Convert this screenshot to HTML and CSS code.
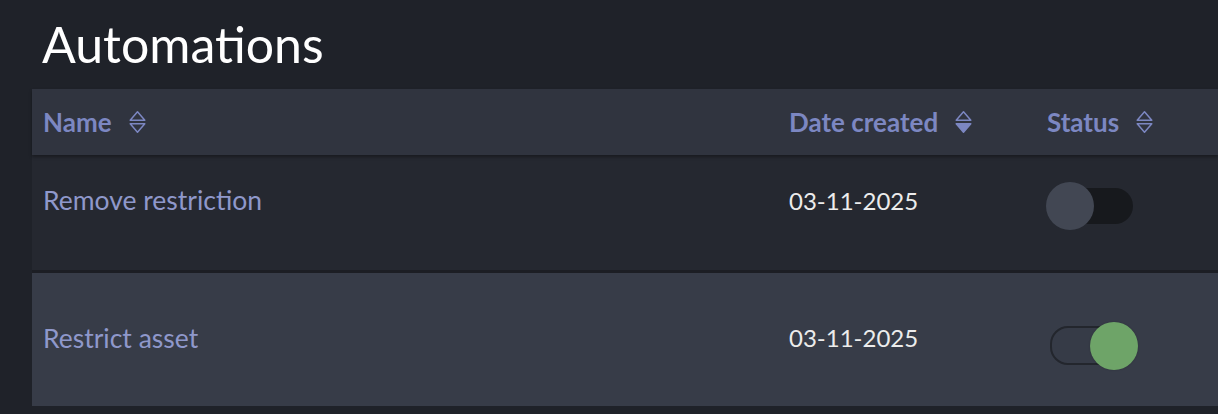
FILE: index.html
```html
<!DOCTYPE html>
<html lang="en">
<head>
<meta charset="utf-8">
<title>Automations</title>
<link rel="stylesheet" href="styles.css">
</head>
<body>
  <h1 class="title">Automations</h1>
  <div class="table">
    <div class="row head">
      <div class="cell">Name<svg class="sort" viewBox="0 0 17 24"><path d="M1.2 10.3 L8.5 1.8 L15.8 10.3 Z" fill="none" stroke="currentColor" stroke-width="1.5" stroke-linejoin="round"/><path d="M1.2 13.7 L8.5 22.2 L15.8 13.7 Z" fill="none" stroke="currentColor" stroke-width="1.5" stroke-linejoin="round"/></svg></div>
      <div class="cell">Date created<svg class="sort" viewBox="0 0 17 24"><path d="M1.2 10.3 L8.5 1.8 L15.8 10.3 Z" fill="none" stroke="currentColor" stroke-width="1.5" stroke-linejoin="round"/><path d="M1.2 13.7 L8.5 22.2 L15.8 13.7 Z" fill="currentColor" stroke="currentColor" stroke-width="1.5" stroke-linejoin="round"/></svg></div>
      <div class="cell">Status<svg class="sort" viewBox="0 0 17 24"><path d="M1.2 10.3 L8.5 1.8 L15.8 10.3 Z" fill="none" stroke="currentColor" stroke-width="1.5" stroke-linejoin="round"/><path d="M1.2 13.7 L8.5 22.2 L15.8 13.7 Z" fill="none" stroke="currentColor" stroke-width="1.5" stroke-linejoin="round"/></svg></div>
    </div>
    <div class="row body first">
      <div class="cell name">Remove restriction</div>
      <div class="cell date">03-11-2025</div>
      <div class="cell"><span class="toggle off"><span class="knob"></span></span></div>
    </div>
    <div class="row body second">
      <div class="cell name">Restrict asset</div>
      <div class="cell date">03-11-2025</div>
      <div class="cell"><span class="toggle on"><span class="knob"></span></span></div>
    </div>
  </div>
</body>
</html>
```

FILE: styles.css
```css
* { box-sizing: border-box; }
html, body { margin: 0; padding: 0; }
body {
  background: #1f2229;
  font-family: "Lato", "Open Sans", sans-serif;
  width: 1218px;
  height: 414px;
  overflow: hidden;
}
.title {
  margin: 0;
  height: 89px;
  padding: 12px 0 0 42px;
  font-size: 50px;
  font-weight: 400;
  color: #ffffff;
  line-height: 64px;
}
.table {
  margin-left: 32px;
  display: flex;
  flex-direction: column;
}
.row {
  display: grid;
  grid-template-columns: 746px 258px 1fr;
  align-items: center;
}
.cell { padding-left: 11px; display: flex; align-items: center; }
.head {
  height: 66px;
  background: #30343f;
  color: #7c87c2;
  font-weight: 700;
  font-size: 26px;
  box-shadow: 0 2px 3px rgba(0,0,0,0.35);
  position: relative;
  z-index: 1;
}
.sort {
  width: 17px;
  height: 24px;
  margin-left: 17px;
  color: #7c87c2;
  flex: none;
}
.body { font-size: 24px; }
.first {
  height: 118px;
  background: #252830;
  padding-bottom: 25px;
  border-bottom: 3px solid #1c1e24;
}
.second {
  height: 133px;
  background: #373c48;
  padding-bottom: 4px;
}
.name { color: #8f98cb; font-size: 26.5px; }
.date { color: #ececec; }
.toggle {
  position: relative;
  display: block;
  width: 84px;
  height: 36px;
  border-radius: 18px;
  margin-top: 12px;
}
.toggle.off { background: #17191d; margin-left: 2px; }
.toggle.on { background: #363b47; border: 2px solid #23262d; margin-left: 3px; margin-top: 16px; width: 80px; height: 39px; }
.knob {
  position: absolute;
  width: 48px;
  height: 48px;
  border-radius: 50%;
  top: 50%;
  transform: translateY(-50%);
}
.off .knob { left: -3px; background: #424753; }
.on .knob { right: -10px; background: #6ea468; box-shadow: 0 0 2px rgba(0,0,0,0.2); }
```
